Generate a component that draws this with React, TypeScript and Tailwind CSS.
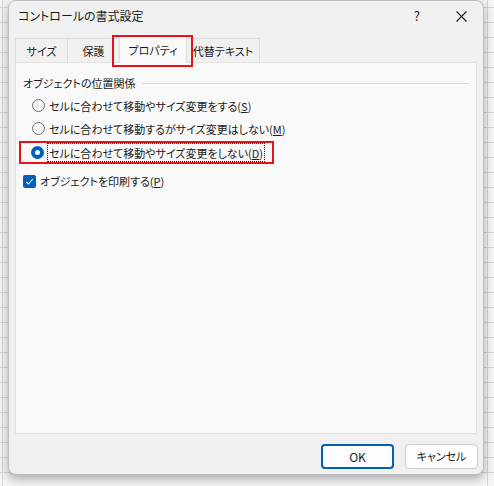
import React from 'react';

const font = "font-['Noto_Sans_CJK_JP','Noto_Sans',sans-serif] [font-feature-settings:'palt']";

const Radio: React.FC<{ checked?: boolean }> = ({ checked }) =>
    checked ? (
        <span className="flex h-[13px] w-[13px] shrink-0 items-center justify-center rounded-full bg-[#005fb8]">
            <span className="h-[5px] w-[5px] rounded-full bg-white" />
        </span>
    ) : (
        <span className="h-[13px] w-[13px] shrink-0 rounded-full border border-[#6e6e6e] bg-[#f6f6f6]" />
    );

const Tab: React.FC<{ label: string; className?: string }> = ({ label, className }) => (
    <div className={`flex h-[24px] items-center justify-center border border-b-0 border-[#dcdcdc] bg-[#f0f0f0] ${className}`}>
        <span className="text-[11px] leading-[16px] text-[#1a1a1a]">{label}</span>
    </div>
);

const App: React.FC = () => {
    return (
        <div
            className={`h-[486px] w-[494px] overflow-hidden bg-[#f4f4f4] bg-[linear-gradient(to_bottom,transparent_14px,#d4d4d4_14px,#d4d4d4_15px),linear-gradient(to_right,transparent_2px,#d4d4d4_2px,#d4d4d4_3px,transparent_3px,transparent_487px,#d4d4d4_487px,#d4d4d4_488px,transparent_488px)] bg-[length:100%_15px,100%_100%] bg-[position:0_8px,0_0] pl-[8px] ${font}`}
        >
            {/* Dialog */}
            <div className="flex h-[475px] w-[476px] flex-col rounded-[8px] border border-[#bdbdbd] bg-[#f0f0f0] shadow-[0_4px_10px_rgba(0,0,0,0.3)]">
                {/* Title bar */}
                <div className="flex h-[30px] shrink-0 items-center pl-[9px]">
                    <span className="text-[12px] text-[#1a1a1a]">コントロールの書式設定</span>
                    <span className="ml-auto mr-[36px] text-[13px] text-[#1a1a1a]">?</span>
                    <svg className="mr-[16px]" width="11" height="11" viewBox="0 0 11 11">
                        <path d="M0.5 0.5L10.5 10.5M10.5 0.5L0.5 10.5" stroke="#1a1a1a" strokeWidth="1.1" />
                    </svg>
                </div>

                {/* Tabs */}
                <div className="mt-[5px] flex h-[26px] shrink-0 items-end pl-[6px]">
                    <Tab label="サイズ" className="w-[53px]" />
                    <Tab label="保護" className="-ml-px w-[53px]" />
                    <div className="relative z-10 -mb-px -ml-px flex h-[27px] w-[68px] items-center justify-center border border-b-0 border-[#dcdcdc] bg-[#f9f9f9]">
                        <span className="text-[11px] leading-[16px] text-[#1a1a1a]">プロパティ</span>
                        {/* red highlight */}
                        <span className="absolute left-[-8px] top-[-2px] h-[32px] w-[81px] border-2 border-[#e8101a]" />
                    </div>
                    <Tab label="代替テキスト" className="-ml-px w-[74px]" />
                </div>

                {/* Panel */}
                <div className="mx-[6px] flex h-[372px] shrink-0 flex-col border border-[#e2e2e2] bg-[#f9f9f9] pt-[12px]">
                    <div className="flex items-center gap-[5px] pl-[7px] pr-[7px]">
                        <span className="text-[11px] leading-[16px] text-[#1a1a1a]">オブジェクトの位置関係</span>
                        <span className="h-px flex-1 bg-[#dcdcdc]" />
                    </div>

                    <div className="mt-[3px] flex h-[23px] items-center gap-[4px] pl-[16px]">
                        <Radio />
                        <span className="whitespace-nowrap text-[11px] leading-[16px] text-[#1a1a1a]">
                            セルに合わせて移動やサイズ変更をする(<u>S</u>)
                        </span>
                    </div>
                    <div className="flex h-[23px] items-center gap-[4px] pl-[16px]">
                        <Radio />
                        <span className="whitespace-nowrap text-[11px] leading-[16px] text-[#1a1a1a]">
                            セルに合わせて移動するがサイズ変更はしない(<u>M</u>)
                        </span>
                    </div>
                    <div className="ml-[3px] mt-px flex h-[23px] w-[255px] items-center gap-[3px] border-2 border-[#e8101a] pl-[10px]">
                        <Radio checked />
                        <span className="flex h-[19px] items-center whitespace-nowrap border border-dotted border-[#1a1a1a] px-px text-[11px] leading-[16px] text-[#1a1a1a]">
                            セルに合わせて移動やサイズ変更をしない(<u>D</u>)
                        </span>
                    </div>

                    <div className="mt-[9px] flex items-center gap-[4px] pl-[7px]">
                        <span className="flex h-[13px] w-[13px] items-center justify-center rounded-[2px] bg-[#005fb8]">
                            <svg width="9" height="9" viewBox="0 0 9 9">
                                <path d="M1.2 4.8L3.4 7L7.8 2" fill="none" stroke="white" strokeWidth="1.1" />
                            </svg>
                        </span>
                        <span className="text-[11px] leading-[16px] text-[#1a1a1a]">
                            オブジェクトを印刷する(<u>P</u>)
                        </span>
                    </div>
                </div>

                {/* Buttons */}
                <div className="mt-[10px] flex justify-end gap-[11px] pr-[5px]">
                    <button className="h-[25px] w-[73px] rounded-[4px] border-2 border-[#005fb8] bg-[#fdfdfd] text-[12px] text-[#1a1a1a]">
                        OK
                    </button>
                    <button className="h-[25px] w-[73px] rounded-[4px] border border-[#d0d0d0] bg-[#fdfdfd] text-[11px] text-[#1a1a1a]">
                        キャンセル
                    </button>
                </div>
            </div>
        </div>
    );
};

export default App;
